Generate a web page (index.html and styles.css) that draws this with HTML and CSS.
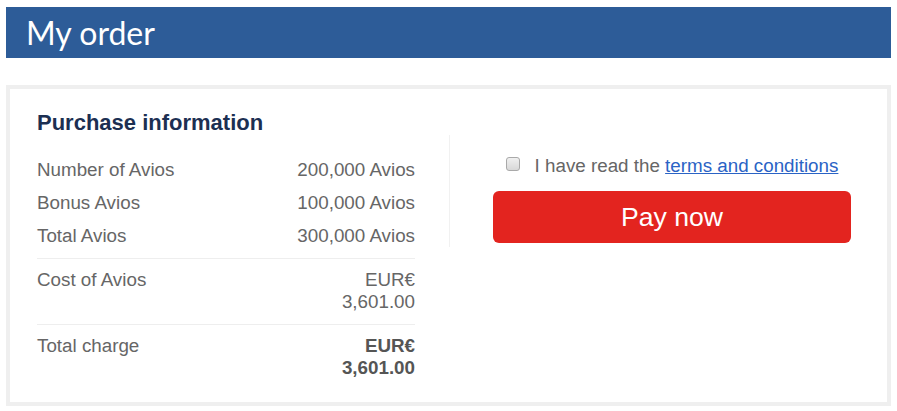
FILE: index.html
```html
<!DOCTYPE html>
<html lang="en">
<head>
    <meta charset="UTF-8">
    <meta name="viewport" content="width=device-width, initial-scale=1.0">
    <title>My order</title>
    <link rel="stylesheet" href="styles.css">
</head>
<body>
    <div id="page">
        <h1 class="page-title">My order</h1>
        <div class="order-card">
            <h2 class="card-title">Purchase information</h2>
            <div class="order-row">
                <div class="summary">
                    <div class="summary-group">
                        <div class="line"><span>Number of Avios</span><span>200,000 Avios</span></div>
                        <div class="line"><span>Bonus Avios</span><span>100,000 Avios</span></div>
                        <div class="line"><span>Total Avios</span><span>300,000 Avios</span></div>
                    </div>
                    <div class="summary-group cost">
                        <div class="line"><span>Cost of Avios</span><span class="amount">EUR€<br>3,601.00</span></div>
                    </div>
                    <div class="summary-group total">
                        <div class="line"><span>Total charge</span><span class="amount">EUR€<br>3,601.00</span></div>
                    </div>
                </div>
                <div class="pay">
                    <label class="terms">
                        <input type="checkbox">
                        <span>I have read the <a href="#">terms and conditions</a></span>
                    </label>
                    <button class="pay-btn">Pay now</button>
                </div>
            </div>
        </div>
    </div>
</body>
</html>
```
FILE: styles.css
```css
*{
    margin: 0;
    padding: 0;
    box-sizing: border-box;
}
body{
    background: #fff;
    font-family: "Liberation Sans", Arial, sans-serif;
    color: #666;
}
#page{
    width: 885px;
    margin: 7px 0 0 6px;
}
.page-title{
    height: 51px;
    line-height: 51px;
    padding-left: 20px;
    background: #2d5c98;
    color: #fff;
    font-family: Lato, "Open Sans", sans-serif;
    font-size: 32px;
    font-weight: 400;
}
.order-card{
    margin-top: 27px;
    border: 4px solid #efefef;
    padding: 21px 27px 23px 27px;
}
.card-title{
    font-size: 22px;
    line-height: 25px;
    font-weight: bold;
    color: #1c2f52;
}
.order-row{
    display: flex;
    align-items: flex-start;
}
.summary{
    flex: 0 0 412px;
    padding: 18px 34px 0 0;
    font-size: 18.8px;
}
.summary-group{
    padding-bottom: 6px;
    border-bottom: 1px solid #eee;
}
.summary-group .line{
    display: flex;
    justify-content: space-between;
    line-height: 33px;
}
.summary-group.cost{
    padding: 10px 0 11px;
}
.summary-group.total{
    padding: 10px 0 0;
    border-bottom: none;
}
.cost .line,
.total .line{
    line-height: 22px;
}
.amount{
    text-align: right;
}
.total .amount{
    font-weight: bold;
    color: #555;
}
.pay{
    flex: 1;
    height: 112px;
    border-left: 1px solid #f1f1f1;
    padding: 17px 0 0 43px;
}
.terms{
    width: 358px;
    display: flex;
    justify-content: center;
    align-items: center;
    line-height: 27px;
    font-size: 18.8px;
    color: #666;
}
.terms input{
    appearance: none;
    -webkit-appearance: none;
    width: 14px;
    height: 14px;
    margin: 0 15px 3px 0;
    border: 1px solid #a9a9a9;
    border-radius: 3px;
    background: linear-gradient(#f0f0f0, #d8d8d8);
}
.terms a{
    color: #2a63c5;
    text-decoration: underline;
}
.pay-btn{
    display: block;
    width: 358px;
    height: 52px;
    margin-top: 12px;
    border: none;
    border-radius: 6px;
    background: #e3241f;
    color: #fff;
    font-family: "Liberation Sans", Arial, sans-serif;
    font-size: 26.6px;
    cursor: pointer;
}
```
